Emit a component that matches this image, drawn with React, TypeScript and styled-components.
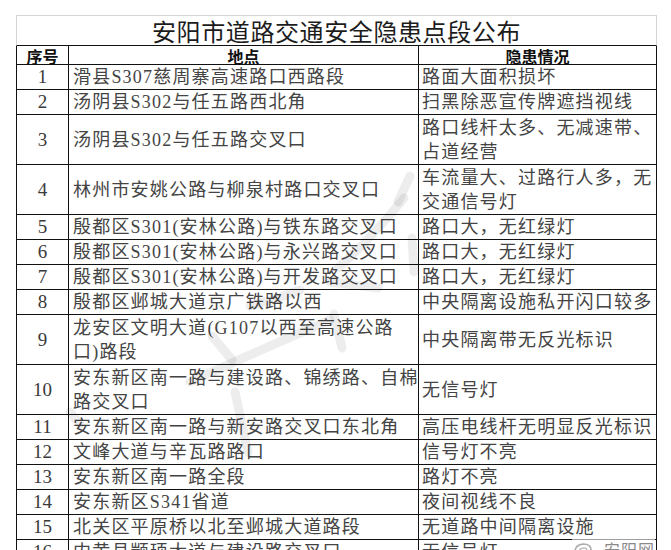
import React from 'react'
import styled, { createGlobalStyle } from 'styled-components';

type Row = { n: number; place: string[]; issue: string[]; tall?: boolean };

const rows: Row[] = [
    { n: 1, place: ['滑县S307慈周寨高速路口西路段'], issue: ['路面大面积损坏'] },
    { n: 2, place: ['汤阴县S302与任五路西北角'], issue: ['扫黑除恶宣传牌遮挡视线'] },
    { n: 3, place: ['汤阴县S302与任五路交叉口'], issue: ['路口线杆太多、无减速带、', '占道经营'], tall: true },
    { n: 4, place: ['林州市安姚公路与柳泉村路口交叉口'], issue: ['车流量大、过路行人多，无', '交通信号灯'], tall: true },
    { n: 5, place: ['殷都区S301(安林公路)与铁东路交叉口'], issue: ['路口大，无红绿灯'] },
    { n: 6, place: ['殷都区S301(安林公路)与永兴路交叉口'], issue: ['路口大，无红绿灯'] },
    { n: 7, place: ['殷都区S301(安林公路)与开发路交叉口'], issue: ['路口大，无红绿灯'] },
    { n: 8, place: ['殷都区邺城大道京广铁路以西'], issue: ['中央隔离设施私开闪口较多'] },
    { n: 9, place: ['龙安区文明大道(G107以西至高速公路', '口)路段'], issue: ['中央隔离带无反光标识'], tall: true },
    { n: 10, place: ['安东新区南一路与建设路、锦绣路、自棉', '路交叉口'], issue: ['无信号灯'], tall: true },
    { n: 11, place: ['安东新区南一路与新安路交叉口东北角'], issue: ['高压电线杆无明显反光标识'] },
    { n: 12, place: ['文峰大道与辛瓦路路口'], issue: ['信号灯不亮'] },
    { n: 13, place: ['安东新区南一路全段'], issue: ['路灯不亮'] },
    { n: 14, place: ['安东新区S341省道'], issue: ['夜间视线不良'] },
    { n: 15, place: ['北关区平原桥以北至邺城大道路段'], issue: ['无道路中间隔离设施'] },
    { n: 16, place: ['内黄县颛顼大道与建设路交叉口'], issue: ['无信号灯'] },
];

const Lines = ({ lines }: { lines: string[] }) =>
    <span>{lines.map((l, i) => <React.Fragment key={i}>{i > 0 && <br/>}{l}</React.Fragment>)}</span>;

const App = () =>
    <Page>
        <GlobalStyle/>
        <Sheet>
            <TitleCell>安阳市道路交通安全隐患点段公布</TitleCell>
            <HeadCell $first>序号</HeadCell>
            <HeadCell>地点</HeadCell>
            <HeadCell>隐患情况</HeadCell>
            {rows.map(r =>
                <React.Fragment key={r.n}>
                    <NumCell $tall={r.tall}>{r.n}</NumCell>
                    <TextCell $tall={r.tall}><Lines lines={r.place}/></TextCell>
                    <TextCell $tall={r.tall} $pad={3}><Lines lines={r.issue}/></TextCell>
                </React.Fragment>
            )}
        </Sheet>
        <Watermark width="671" height="550" viewBox="0 0 671 550">
            <g stroke="#000" strokeOpacity="0.07" strokeWidth="9" strokeLinecap="round" fill="none">
                <path d="M410 176 L398 202"/>
                <path d="M404 198 Q370 240 338 268"/>
                <path d="M412 238 L414 272"/>
                <path d="M330 282 L378 288"/>
                <path d="M250 306 Q275 300 300 290"/>
                <path d="M190 382 Q260 350 330 320"/>
                <path d="M212 336 L232 360"/>
                <path d="M334 314 L342 348"/>
                <path d="M70 412 L80 424"/>
                <path d="M235 392 L248 452"/>
            </g>
        </Watermark>
        <Badge>
            <svg width="22" height="14" viewBox="0 0 22 14">
                <path d="M3 12 Q2 3 11 2 Q19 2 19 8" stroke="#aaa" strokeWidth="1.6" fill="none"/>
                <path d="M7 11 Q7 6 12 6 Q15 6 15 9" stroke="#bbb" strokeWidth="1.4" fill="none"/>
            </svg>
            <BadgeText>安阳网</BadgeText>
        </Badge>
    </Page>;

const GlobalStyle = createGlobalStyle`
  html, body {
    margin: 0;
    padding: 0;
    background: #fff;
    overflow: hidden;
  }
  body {
    font-family: "Liberation Serif", "Noto Sans CJK SC", serif;
  }
`;

const Page = styled.div`
  position: relative;
  width: 671px;
  height: 550px;
  overflow: hidden;
  padding: 15px 0 0 16px;
  box-sizing: border-box;
`;

const Sheet = styled.div`
  display: grid;
  grid-template-columns: 53px 350px 238px;
  width: 641px;
  color: #333;
`;

const TitleCell = styled.div`
  grid-column: 1 / span 3;
  box-sizing: border-box;
  height: 31px;
  border: 1px solid #d4d4d4;
  border-bottom: 1px solid #111;
  display: flex;
  align-items: flex-end;
  justify-content: center;
  padding-bottom: 2px;
  font-family: "Noto Sans CJK SC", sans-serif;
  font-size: 24px;
  line-height: 24px;
  letter-spacing: 0.6px;
  color: #1c1c1c;
`;

const HeadCell = styled.div<{ $first?: boolean }>`
  box-sizing: border-box;
  height: 19px;
  border-right: 1px solid #111;
  border-bottom: 1px solid #111;
  border-left: ${p => p.$first ? '1px solid #111' : 'none'};
  display: flex;
  align-items: flex-end;
  justify-content: center;
  font-family: "Noto Sans CJK SC", sans-serif;
  font-weight: bold;
  font-size: 16px;
  line-height: 16px;
  color: #111;
`;

const NumCell = styled.div<{ $tall?: boolean }>`
  box-sizing: border-box;
  height: ${p => p.$tall ? 50 : 25}px;
  border-left: 1px solid #111;
  border-right: 1px solid #111;
  border-bottom: 1px solid #111;
  display: flex;
  align-items: center;
  justify-content: center;
  font-family: "Liberation Serif", serif;
  font-size: 19px;
  color: #3a3a3a;
`;

const TextCell = styled.div<{ $tall?: boolean; $pad?: number }>`
  box-sizing: border-box;
  height: ${p => p.$tall ? 50 : 25}px;
  border-right: 1px solid #111;
  border-bottom: 1px solid #111;
  display: flex;
  align-items: center;
  padding-left: ${p => p.$pad ?? 4}px;
  font-family: "Liberation Serif", "Noto Sans CJK SC", serif;
  font-size: 18px;
  line-height: 24px;
  letter-spacing: 1.2px;
  white-space: nowrap;
  color: #444;
`;

const Watermark = styled.svg`
  position: absolute;
  left: 0;
  top: 0;
  pointer-events: none;
`;

const Badge = styled.div`
  position: absolute;
  left: 572px;
  top: 537px;
  display: flex;
  align-items: center;
  gap: 10px;
  background: rgba(255, 255, 255, 0.6);
`;

const BadgeText = styled.span`
  font-family: "Noto Sans CJK SC", sans-serif;
  font-size: 16px;
  color: #8a8a8a;
  letter-spacing: 1px;
`;

export default App
